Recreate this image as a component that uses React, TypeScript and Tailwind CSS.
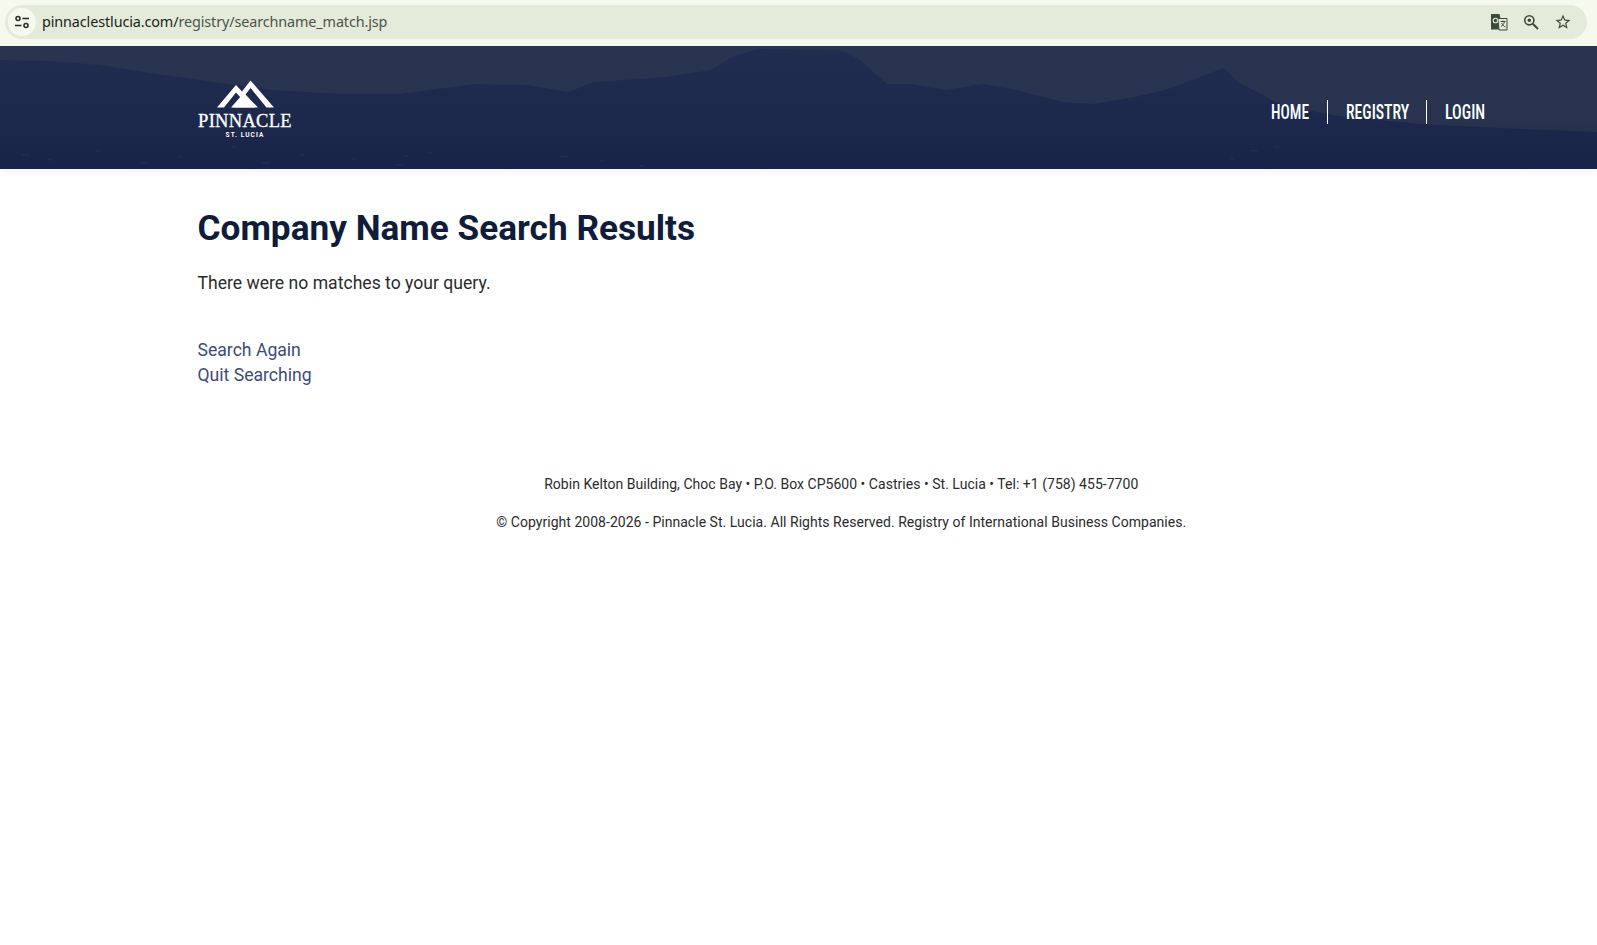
import React from "react";

function Mountains() {
  const lights = [
    [22, 108], [48, 113], [95, 104], [140, 116], [178, 110], [232, 100], [262, 116], [300, 108], [352, 112], [395, 118],
    [404, 109], [428, 106], [560, 110], [600, 114], [640, 119], [1250, 104], [1230, 112], [1275, 100],
  ];
  return (
    <svg className="absolute inset-0 w-full h-full" viewBox="0 0 1597 123" preserveAspectRatio="none">
      <defs>
        <linearGradient id="sky" x1="0" y1="0" x2="0" y2="1">
          <stop offset="0" stopColor="#293450" />
          <stop offset="0.6" stopColor="#28334f" />
          <stop offset="1" stopColor="#1e2a4c" />
        </linearGradient>
        <linearGradient id="land" x1="0" y1="0" x2="0" y2="1">
          <stop offset="0" stopColor="#202d50" />
          <stop offset="0.55" stopColor="#1c294d" />
          <stop offset="1" stopColor="#172447" />
        </linearGradient>
      </defs>
      <rect width="1597" height="123" fill="url(#sky)" />
      <path
        d="M0 14 L50 15 L100 19 L150 27 L200 34 L273 44 L340 48 L400 48 L436 43 L476 38 L528 39 L568 46 L594 36 L665 31 L711 24 L732 11 L757 3 L839 4 L859 13 L887 38 L910 38 L946 44 L982 38 L1012 43 L1063 56 L1094 58 L1135 51 L1165 44 L1200 31 L1223 22 L1240 37 L1283 60 L1340 70 L1420 78 L1500 82 L1597 86 L1597 123 L0 123 Z"
        fill="url(#land)"
      />
      {lights.map(([x, y], i) => (
        <rect key={i} x={x} y={y} width={i % 3 === 0 ? 8 : 4} height="1.5" fill="#33415f" opacity="0.28" />
      ))}
    </svg>
  );
}

function Logo() {
  return (
    <div className="relative flex flex-col items-center w-[94px] text-white">
      <svg width="57" height="28" viewBox="0 0 57 28" className="block">
        <path
          d="M0 27.5 L19 5 L25 11.5 L33.5 0.5 L57 27.5 L49.5 27.5 L33.5 8 L28.5 14.5 L41 27.5 L16 27.5 L24 18 L19 12.5 L7 27.5 Z"
          fill="#ffffff"
          fillRule="evenodd"
        />
        <path d="M14 27.5 L24.5 15.5 L38 27.5 Z" fill="#ffffff" />
      </svg>
      <div className="font-['Liberation_Serif',serif] text-[18.5px] leading-[20px] mt-[3px] tracking-[0.3px] whitespace-nowrap [-webkit-text-stroke:0.3px_white]">PINNACLE</div>
      <div className="font-['Roboto',sans-serif] font-bold text-[6.5px] leading-[8px] tracking-[1.1px] mt-[0px] whitespace-nowrap">ST. LUCIA</div>
    </div>
  );
}

function TuneIcon() {
  return (
    <svg width="16" height="16" viewBox="0 0 16 16" fill="none" stroke="#29302a" strokeWidth="1.6">
      <circle cx="4" cy="4.5" r="2" />
      <path d="M8.5 4.5 H15" />
      <path d="M1 11.5 H7.5" />
      <circle cx="12" cy="11.5" r="2" />
    </svg>
  );
}

function TranslateIcon() {
  return (
    <svg width="18" height="18" viewBox="0 0 18 18">
      <path d="M1 1 H9.5 L13 16.5 H1 Z" fill="#3d4a3a" />
      <path d="M8 5.5 H17 V17 H9 Z" fill="#e4ebdb" stroke="#3d4a3a" strokeWidth="1" />
      <circle cx="5.5" cy="7.5" r="2.3" fill="none" stroke="#e4ebdb" strokeWidth="1.1" />
      <path d="M10.5 8.5 H15.5 M13 7.5 V8.5 M14.5 8.5 C14 11 12.5 12.5 11 13.5 M11.5 10 C12.5 12 14 13.5 15.5 14" fill="none" stroke="#3d4a3a" strokeWidth="1" />
    </svg>
  );
}

function ZoomIcon() {
  return (
    <svg width="16" height="16" viewBox="0 0 16 16" fill="none" stroke="#3d4a3a">
      <circle cx="6.3" cy="6.3" r="4.6" strokeWidth="1.6" />
      <circle cx="6.3" cy="6.3" r="1.7" fill="#3d4a3a" stroke="none" />
      <path d="M9.8 9.8 L15 15" strokeWidth="2" />
    </svg>
  );
}

function StarIcon() {
  return (
    <svg width="18" height="18" viewBox="0 0 24 24" fill="#3d4a3a">
      <path d="M22 9.24l-7.19-.62L12 2 9.19 8.63 2 9.24l5.46 4.73L5.82 21 12 17.27 18.18 21l-1.63-7.03L22 9.24zM12 15.4l-3.76 2.27 1-4.28-3.32-2.88 4.38-.38L12 6.1l1.71 4.04 4.38.38-3.32 2.88 1 4.28L12 15.4z" />
    </svg>
  );
}

export default function App() {
  return (
    <div className="min-h-[945px] bg-white font-['Roboto',sans-serif]">
      <div className="h-[46px] bg-[#f5f9ee] pt-[5px] pl-[5px] pr-[10px]">
        <div className="h-[34px] rounded-full bg-[#e4ebdb] flex items-center pl-[3px] pr-[15px]">
          <div className="w-[28px] h-[28px] rounded-full bg-[#f5f9ee] flex items-center justify-center">
            <TuneIcon />
          </div>
          <div className="ml-[6px] text-[14.4px] text-[#4c5249] font-['Noto_Sans',sans-serif] tracking-[-0.12px] flex-1 whitespace-nowrap">
            <span className="text-[#1a1f19]">pinnaclestlucia.com/</span>registry/searchname_match.jsp
          </div>
          <div className="flex items-center gap-[15px]">
            <TranslateIcon />
            <ZoomIcon />
            <StarIcon />
          </div>
        </div>
      </div>

      <header className="relative h-[123px] bg-[#1e2a4c] overflow-hidden shadow-[0_3px_6px_rgba(30,60,110,0.06)]">
        <Mountains />
        <div className="relative h-full pl-[198px] pr-[112px] flex items-center justify-between">
          <div className="mt-[4px]">
            <Logo />
          </div>
          <nav className="flex items-center mt-[9px] font-['Roboto_Condensed','Liberation_Sans_Narrow','Liberation_Sans',sans-serif] font-medium text-white text-[20.5px] leading-[24px]">
            <a className="pr-[18px] border-r border-white">
              <span className="inline-block w-[38px] whitespace-nowrap origin-left scale-x-[0.75]">HOME</span>
            </a>
            <a className="pl-[18px] pr-[18px] border-r border-white">
              <span className="inline-block w-[62px] whitespace-nowrap origin-left scale-x-[0.77]">REGISTRY</span>
            </a>
            <a className="pl-[18px]">
              <span className="inline-block w-[40px] whitespace-nowrap origin-left scale-x-[0.78]">LOGIN</span>
            </a>
          </nav>
        </div>
      </header>

      <main className="pl-[197.5px] pr-[112px]">
        <h1 className="mt-[39px] text-[35.2px] leading-[40px] font-bold text-[#0f1c3a]">Company Name Search Results</h1>
        <p className="mt-[23px] text-[17.6px] leading-[25px] text-[#2b2b2b]">There were no matches to your query.</p>
        <div className="mt-[42px] flex flex-col text-[17.6px] leading-[25px] text-[#3d4a7a]">
          <a>Search Again</a>
          <a>Quit Searching</a>
        </div>
        <footer className="mt-[86px] text-center text-[14px] tracking-[0.03px] leading-[20px] text-[#2b2b2b]">
          <p>Robin Kelton Building, Choc Bay • P.O. Box CP5600 • Castries • St. Lucia • Tel: +1 (758) 455-7700</p>
          <p className="mt-[18px]">© Copyright 2008-2026 - Pinnacle St. Lucia. All Rights Reserved. Registry of International Business Companies.</p>
        </footer>
      </main>
    </div>
  );
}
